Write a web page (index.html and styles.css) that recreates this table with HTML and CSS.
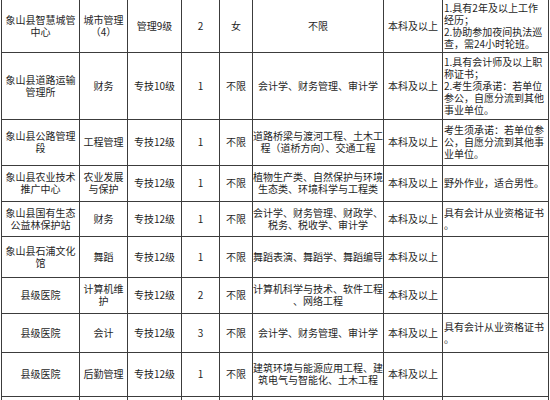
FILE: index.html
```html
<!DOCTYPE html>
<html lang="zh-CN">
<head>
<meta charset="utf-8">
<title>象山县招聘岗位表</title>
<link rel="stylesheet" href="styles.css">
</head>
<body>
<table class="jobs">
  <colgroup>
    <col class="c1"><col class="c2"><col class="c3"><col class="c4"><col class="c5"><col class="c6"><col class="c7"><col class="c8">
  </colgroup>
  <tbody>
    <tr class="r1">
      <td>象山县智慧城管<br>中心</td>
      <td>城市管理<br>（4）</td>
      <td>管理9级</td>
      <td>2</td>
      <td>女</td>
      <td>不限</td>
      <td>本科及以上</td>
      <td class="note">1.具有2年及以上工作<br>经历；<br>2.协助参加夜间执法巡<br>查，需24小时轮班。</td>
    </tr>
    <tr class="r2">
      <td>象山县道路运输<br>管理所</td>
      <td>财务</td>
      <td>专技10级</td>
      <td>1</td>
      <td>不限</td>
      <td>会计学、财务管理、审计学</td>
      <td>本科及以上</td>
      <td class="note">1.具有会计师及以上职<br>称证书；<br>2.考生须承诺：若单位<br>参公，自愿分流到其他<br>事业单位。</td>
    </tr>
    <tr class="r3">
      <td>象山县公路管理<br>段</td>
      <td>工程管理</td>
      <td>专技12级</td>
      <td>1</td>
      <td>不限</td>
      <td>道路桥梁与渡河工程、土木工<br>程（道桥方向）、交通工程</td>
      <td>本科及以上</td>
      <td class="note">考生须承诺：若单位参<br>公，自愿分流到其他事<br>业单位。</td>
    </tr>
    <tr class="r4">
      <td>象山县农业技术<br>推广中心</td>
      <td>农业发展<br>与保护</td>
      <td>专技12级</td>
      <td>1</td>
      <td>不限</td>
      <td>植物生产类、自然保护与环境<br>生态类、环境科学与工程类</td>
      <td>本科及以上</td>
      <td class="note">野外作业，适合男性。</td>
    </tr>
    <tr class="r5">
      <td>象山县国有生态<br>公益林保护站</td>
      <td>财务</td>
      <td>专技12级</td>
      <td>1</td>
      <td>不限</td>
      <td>会计学、财务管理、财政学、<br>税务、税收学、审计学</td>
      <td>本科及以上</td>
      <td class="note">具有会计从业资格证书<br>。</td>
    </tr>
    <tr class="r6">
      <td>象山县石浦文化<br>馆</td>
      <td>舞蹈</td>
      <td>专技12级</td>
      <td>1</td>
      <td>不限</td>
      <td>舞蹈表演、舞蹈学、舞蹈编导</td>
      <td>本科及以上</td>
      <td class="note"></td>
    </tr>
    <tr class="r7">
      <td>县级医院</td>
      <td>计算机维<br>护</td>
      <td>专技12级</td>
      <td>2</td>
      <td>不限</td>
      <td>计算机科学与技术、软件工程<br>、网络工程</td>
      <td>本科及以上</td>
      <td class="note"></td>
    </tr>
    <tr class="r8">
      <td>县级医院</td>
      <td>会计</td>
      <td>专技12级</td>
      <td>3</td>
      <td>不限</td>
      <td>会计学、财务管理、审计学</td>
      <td>本科及以上</td>
      <td class="note">具有会计从业资格证书<br>。</td>
    </tr>
    <tr class="r9">
      <td>县级医院</td>
      <td>后勤管理</td>
      <td>专技12级</td>
      <td>1</td>
      <td>不限</td>
      <td>建筑环境与能源应用工程、建<br>筑电气与智能化、土木工程</td>
      <td>本科及以上</td>
      <td class="note"></td>
    </tr>
    <tr class="r10">
      <td></td><td></td><td></td><td></td><td></td><td></td><td></td><td></td>
    </tr>
  </tbody>
</table>
</body>
</html>
```
FILE: styles.css
```css
html, body {
  margin: 0;
  padding: 0;
  background: #ffffff;
  overflow: hidden;
}

body {
  width: 550px;
  height: 400px;
}

.jobs {
  margin-left: 1px;
  border-collapse: collapse;
  table-layout: fixed;
  width: 548px;
  font-family: "Noto Sans CJK SC", "Noto Sans", sans-serif;
  font-size: 10px;
  line-height: 12px;
  color: #1e1e1e;
}

.c1 { width: 78px; }
.c2 { width: 48px; }
.c3 { width: 54px; }
.c4 { width: 38px; }
.c5 { width: 33px; }
.c6 { width: 131px; }
.c7 { width: 59px; }
.c8 { width: 106px; }

.jobs td {
  border: 1px solid #3c3c3c;
  padding: 0;
  text-align: center;
  vertical-align: middle;
  white-space: nowrap;
  overflow: hidden;
}

.jobs .r1 td { border-top: none; }

.jobs td.note {
  text-align: left;
  padding-left: 1px;
}

.r1 { height: 52px; }
.r2 { height: 67px; }
.r3 { height: 46px; }
.r4 { height: 36px; }
.r5 { height: 35px; }
.r6 { height: 41px; }
.r7 { height: 36px; }
.r8 { height: 39px; }
.r9 { height: 44px; }
.r10 { height: 30px; }
```
